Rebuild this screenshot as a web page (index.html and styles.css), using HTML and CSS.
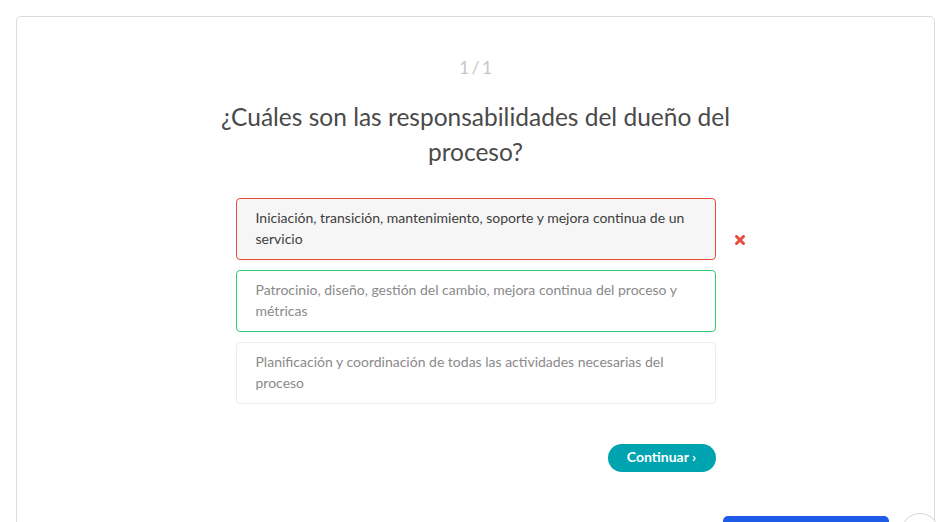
FILE: index.html
```html
<!DOCTYPE html>
<html lang="es">
<head>
<meta charset="utf-8">
<link rel="stylesheet" href="styles.css">
</head>
<body>
<main class="card">
  <div class="counter">1 / 1</div>
  <h1 class="question">¿Cuáles son las responsabilidades del dueño del proceso?</h1>
  <div class="options">
    <div class="option-row">
      <div class="option wrong">Iniciación, transición, mantenimiento, soporte y mejora continua de un servicio</div>
      <svg class="mark" width="10" height="10" viewBox="0 0 10 10" aria-hidden="true">
        <path d="M1.5 1.5 L8.5 8.5 M8.5 1.5 L1.5 8.5" stroke="#e74c3c" stroke-width="3" stroke-linecap="square"/>
      </svg>
    </div>
    <div class="option-row">
      <div class="option right">Patrocinio, diseño, gestión del cambio, mejora continua del proceso y métricas</div>
    </div>
    <div class="option-row">
      <div class="option">Planificación y coordinación de todas las actividades necesarias del proceso</div>
    </div>
  </div>
  <div class="actions">
    <button class="continue">Continuar ›</button>
  </div>
</main>
<div class="float-bar"></div>
<div class="float-circle"></div>
</body>
</html>
```
FILE: styles.css
```css
html, body {
  margin: 0;
  padding: 0;
  height: 100%;
  overflow: hidden;
  background: #fff;
}
body {
  padding: 16px;
  box-sizing: border-box;
  font-family: "Lato", "Open Sans", sans-serif;
}
.card {
  width: 919px;
  height: 620px;
  box-sizing: border-box;
  border: 1px solid #dcdcdc;
  border-radius: 5px;
  padding-top: 39px;
  display: flex;
  flex-direction: column;
  align-items: center;
}
.counter {
  font-size: 18px;
  color: #c8c8c8;
  line-height: 22px;
  word-spacing: -2.5px;
}
.question {
  margin: 21px 0 0;
  width: 560px;
  text-align: center;
  font-weight: 400;
  font-size: 24.5px;
  line-height: 35px;
  color: #4a4a4a;
}
.options {
  margin-top: 29px;
  display: flex;
  flex-direction: column;
  gap: 10px;
}
.option-row {
  position: relative;
  width: 480px;
}
.option {
  box-sizing: border-box;
  width: 480px;
  min-height: 62px;
  border: 1px solid #ececec;
  border-radius: 4px;
  padding: 8px 19px 10px;
  font-size: 14px;
  line-height: 21px;
  color: #8a8a8a;
}
.option.wrong {
  border-color: #e74c3c;
  background: #f6f6f6;
  color: #3d3d3d;
}
.option.right {
  border-color: #2ecc71;
}
.mark {
  position: absolute;
  left: 499px;
  top: 37px;
  display: block;
}
.actions {
  width: 480px;
  display: flex;
  justify-content: flex-end;
  margin-top: 40px;
}
.continue {
  border: none;
  background: #00a3b0;
  color: #fff;
  font-family: inherit;
  font-weight: 700;
  font-size: 14px;
  height: 28px;
  width: 108px;
  border-radius: 14px;
  padding: 0 0 3px;
}
.float-bar {
  position: fixed;
  left: 723px;
  top: 516px;
  width: 166px;
  height: 40px;
  background: #1e5be6;
  border-radius: 5px 5px 0 0;
}
.float-circle {
  position: fixed;
  left: 901px;
  top: 513px;
  width: 38px;
  height: 38px;
  box-sizing: border-box;
  border: 1.5px solid #d4d4d4;
  border-radius: 50%;
  background: #fff;
}
```
